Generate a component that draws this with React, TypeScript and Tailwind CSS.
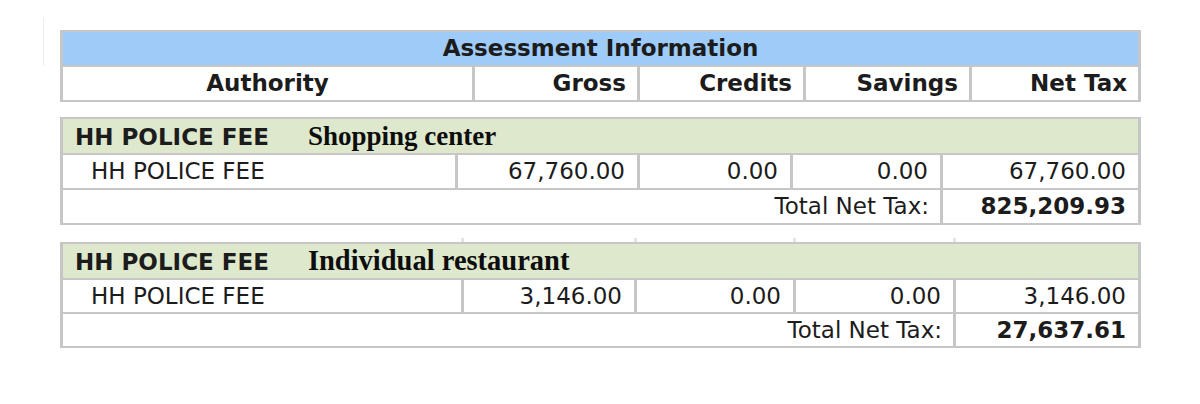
import React from "react";

const cellBase = "bg-white flex items-center";

function HeaderTable() {
  return (
    <div className="grid grid-cols-[409px_162px_163px_163px_1fr] gap-x-[3px] gap-y-[2px] bg-[#c6c6c6] px-[3px] py-[2px]">
      <div className="col-span-5 h-[33px] bg-[#9ecbf8] flex items-center justify-center font-bold text-[23px] leading-none">
        Assessment Information
      </div>
      <div className={`${cellBase} h-[33px] justify-center font-bold text-[23px] leading-none`}>Authority</div>
      <div className={`${cellBase} h-[33px] justify-end pr-[11px] font-bold text-[23px] leading-none`}>Gross</div>
      <div className={`${cellBase} h-[33px] justify-end pr-[11px] font-bold text-[23px] leading-none`}>Credits</div>
      <div className={`${cellBase} h-[33px] justify-end pr-[11px] font-bold text-[23px] leading-none`}>Savings</div>
      <div className={`${cellBase} h-[33px] justify-end pr-[11px] font-bold text-[23px] leading-none`}>Net Tax</div>
    </div>
  );
}

type FeeProps = {
  cols: string;
  label: string;
  labelSize: string;
  gross: string;
  net: string;
  total: string;
  rowH: string;
};

function FeeTable({ cols, label, labelSize, gross, net, total, rowH }: FeeProps) {
  return (
    <div className={`grid ${cols} gap-x-[3px] gap-y-[2px] bg-[#c6c6c6] px-[3px] py-[2px]`}>
      <div className="col-span-5 h-[34px] bg-[#dee8cd] flex items-center pl-[12px]">
        <div className="flex items-baseline">
          <span className="font-bold text-[23px] leading-none">HH POLICE FEE</span>
          <span className={`ml-[39px] font-['Liberation_Serif',serif] font-bold ${labelSize} leading-none text-[#0d0d0d]`}>
            {label}
          </span>
        </div>
      </div>
      <div className={`${cellBase} ${rowH} pl-[28px] text-[23px] leading-none`}>HH POLICE FEE</div>
      <div className={`${cellBase} ${rowH} justify-end pr-[12px] text-[23px] leading-none`}>{gross}</div>
      <div className={`${cellBase} ${rowH} justify-end pr-[12px] text-[23px] leading-none`}>0.00</div>
      <div className={`${cellBase} ${rowH} justify-end pr-[12px] text-[23px] leading-none`}>0.00</div>
      <div className={`${cellBase} ${rowH} justify-end pr-[12px] text-[23px] leading-none`}>{net}</div>
      <div className={`${cellBase} ${rowH} col-span-4 justify-end pr-[11px] text-[23px] leading-none`}>Total Net Tax:</div>
      <div className={`${cellBase} ${rowH} justify-end pr-[12px] font-bold text-[23px] leading-none`}>{total}</div>
    </div>
  );
}

export default function App() {
  return (
    <div className="w-[1200px] h-[404px] bg-white flex font-['DejaVu_Sans',sans-serif] text-[#1c1c1c] overflow-hidden">
      <div className="w-[44px] shrink-0 flex justify-end pt-[18px]">
        <div className="w-px h-[48px] bg-[#ececec]" />
      </div>
      <div className="ml-[16px] pt-[30px] w-[1081px] flex flex-col">
        <HeaderTable />
        <div className="mt-[15px]">
          <FeeTable
            cols="grid-cols-[392px_179px_150px_147px_1fr]"
            label="Shopping center"
            labelSize="text-[27px]"
            gross="67,760.00"
            net="67,760.00"
            total="825,209.93"
            rowH="h-[33px]"
          />
        </div>
        <div className="mt-[13px] h-[4px] px-[3px] grid grid-cols-[401px_173px_159px_160px_1fr]">
          <div className="border-r-[3px] border-[#e4e4e4]" />
          <div className="border-r-[3px] border-[#e4e4e4]" />
          <div className="border-r-[3px] border-[#e4e4e4]" />
          <div className="border-r-[3px] border-[#e4e4e4]" />
          <div />
        </div>
        <div>
          <FeeTable
            cols="grid-cols-[398px_170px_156px_157px_1fr]"
            label="Individual restaurant"
            labelSize="text-[28.5px]"
            gross="3,146.00"
            net="3,146.00"
            total="27,637.61"
            rowH="h-[32px]"
          />
        </div>
      </div>
    </div>
  );
}
